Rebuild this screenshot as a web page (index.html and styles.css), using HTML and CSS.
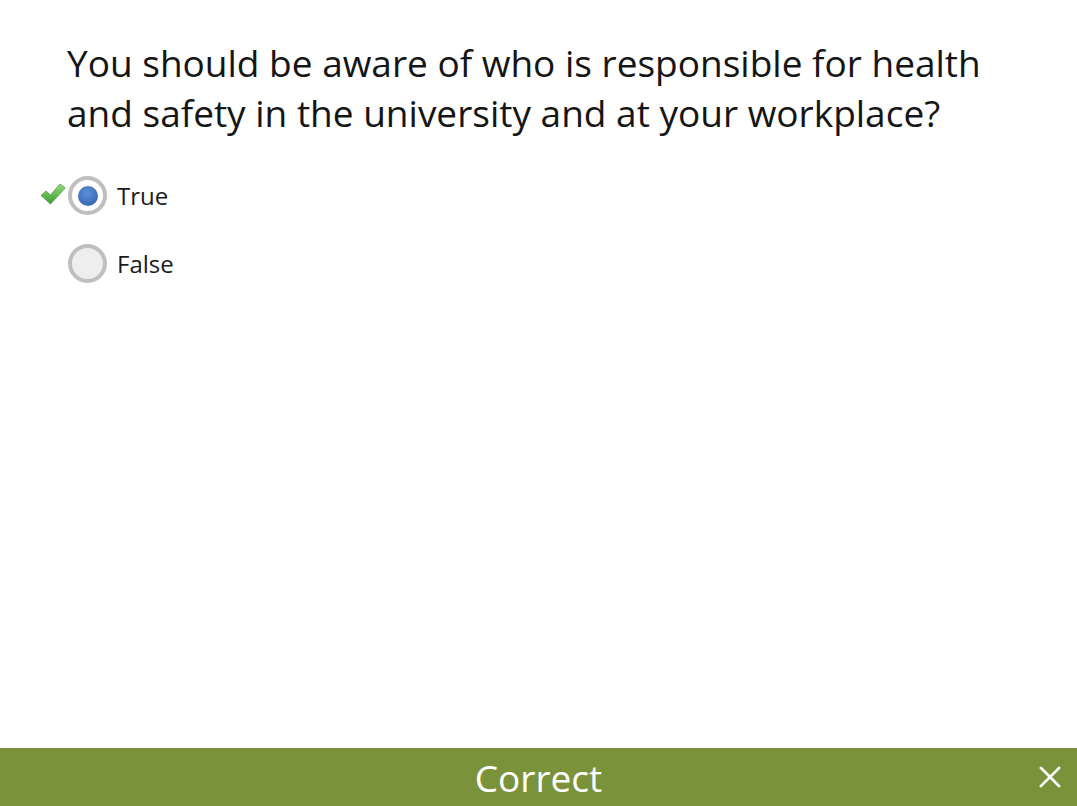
FILE: index.html
```html
<!DOCTYPE html>
<html>
<head>
<meta charset="utf-8">
<link rel="stylesheet" href="styles.css">
</head>
<body>
<div class="page">
  <div class="question">You should be aware of who is responsible for health and safety in the university and at your workplace?</div>
  <div class="options">
    <div class="option">
      <span class="mark">
        <svg width="26" height="22" viewBox="0 0 26 22">
          <defs>
            <linearGradient id="g" x1="0" y1="0" x2="0" y2="1">
              <stop offset="0" stop-color="#96dc80"/>
              <stop offset="1" stop-color="#3f9a32"/>
            </linearGradient>
          </defs>
          <path d="M1 12.5 L6 8 L10.5 12 L20 1 L25.2 5 L10.5 21 Z" fill="url(#g)" stroke="#4f9e3e" stroke-width="0.8" stroke-linejoin="round"/>
        </svg>
      </span>
      <span class="radio checked"><span class="dot"></span></span>
      <span class="label">True</span>
    </div>
    <div class="option">
      <span class="mark"></span>
      <span class="radio"></span>
      <span class="label">False</span>
    </div>
  </div>
</div>
<div class="feedback">
  <span class="feedback-text">Correct</span>
  <span class="close">
    <svg width="22" height="22" viewBox="0 0 22 22"><path d="M2 2 L20 20 M20 2 L2 20" stroke="#fff" stroke-width="2.6" stroke-linecap="square"/></svg>
  </span>
</div>
</body>
</html>
```
FILE: styles.css
```css
html, body {
  margin: 0;
  padding: 0;
  background: #fff;
  font-family: "Open Sans", "Noto Sans", sans-serif;
  color: #1a1a1a;
}
body {
  width: 1077px;
  height: 806px;
  position: relative;
  overflow: hidden;
}
.page {
  padding: 38px 0 0 67px;
}
.question {
  font-size: 37px;
  line-height: 50px;
  width: 980px;
  color: #151515;
}
.options {
  margin-top: 38px;
  display: flex;
  flex-direction: column;
  gap: 29px;
}
.option {
  display: flex;
  align-items: center;
  margin-left: -28px;
  height: 39px;
}
.mark {
  width: 29px;
  height: 22px;
  display: flex;
  align-items: flex-start;
  margin-top: -4px;
}
.mark svg {
  margin-left: 1px;
}
.radio {
  width: 39px;
  height: 39px;
  box-sizing: border-box;
  border-radius: 50%;
  border: 4px solid #bfbfbf;
  background: #eeeeee;
  display: flex;
  align-items: center;
  justify-content: center;
}
.radio.checked {
  background: #fff;
}
.dot {
  width: 20px;
  height: 20px;
  border-radius: 50%;
  background: radial-gradient(circle at 45% 35%, #5a8fd6 0%, #3f71bb 60%, #2f5ea3 100%);
}
.label {
  margin-left: 10px;
  font-size: 24px;
  color: #1a1a1a;
}
.feedback {
  position: absolute;
  left: 0;
  right: 0;
  bottom: 0;
  height: 58px;
  background: #7a933b;
  display: flex;
  align-items: center;
  justify-content: center;
}
.feedback-text {
  color: #fff;
  font-size: 37px;
}
.close {
  position: absolute;
  right: 16px;
  top: 18px;
  width: 22px;
  height: 22px;
}
```
